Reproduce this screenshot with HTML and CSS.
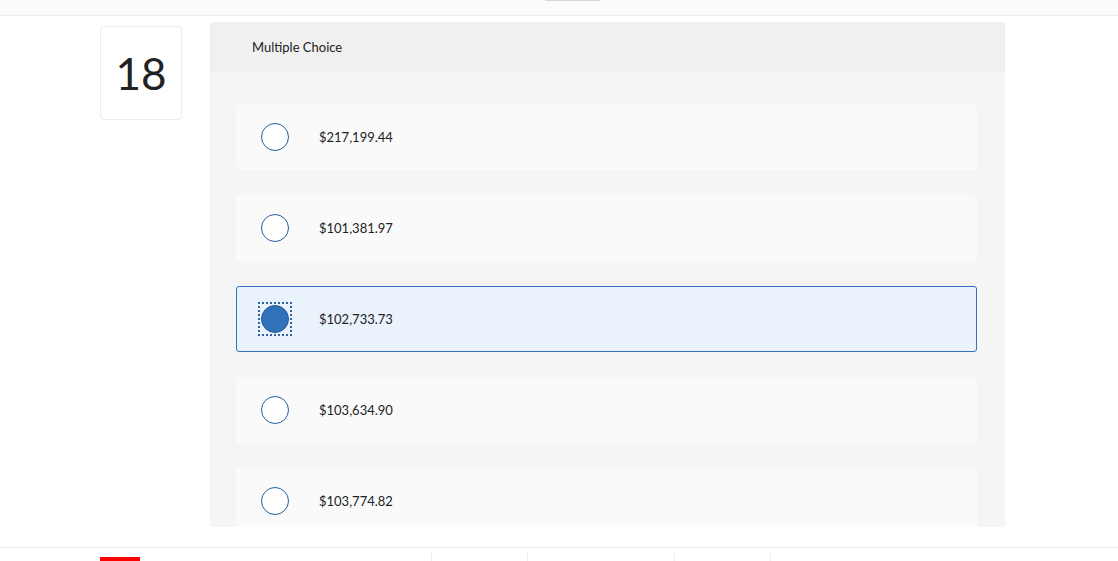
FILE: index.html
```html
<!DOCTYPE html>
<html lang="en">
<head>
    <meta charset="UTF-8">
    <meta name="viewport" content="width=device-width, initial-scale=1.0">
    <title>Question 18</title>
    <link rel="stylesheet" href="styles.css">
</head>
<body>
    <div class="topbar">
        <div class="topbar-tab"></div>
    </div>
    <div class="main">
        <div class="question-number">18</div>
        <div class="question">
            <div class="question-header">Multiple Choice</div>
            <div class="choices">
                <div class="choice">
                    <span class="radio-wrap"><span class="radio"></span></span>
                    <span class="choice-text">$217,199.44</span>
                </div>
                <div class="choice">
                    <span class="radio-wrap"><span class="radio"></span></span>
                    <span class="choice-text">$101,381.97</span>
                </div>
                <div class="choice selected">
                    <span class="radio-wrap"><span class="radio"></span></span>
                    <span class="choice-text">$102,733.73</span>
                </div>
                <div class="choice">
                    <span class="radio-wrap"><span class="radio"></span></span>
                    <span class="choice-text">$103,634.90</span>
                </div>
                <div class="choice">
                    <span class="radio-wrap"><span class="radio"></span></span>
                    <span class="choice-text">$103,774.82</span>
                </div>
            </div>
        </div>
    </div>
    <div class="footer">
        <div class="progress"></div>
        <div class="tabs">
            <div class="tab tab-sm"></div>
            <div class="tab tab-lg"></div>
            <div class="tab tab-sm"></div>
            <div class="tab tab-rest"></div>
        </div>
    </div>
</body>
</html>
```

FILE: styles.css
```css
body {
    font-family: Lato, "Open Sans", Arial, sans-serif;
    margin: 0;
    padding: 0;
    height: 561px;
    overflow: hidden;
    background-color: white;
    color: #222;
}

.topbar {
    height: 15px;
    background-color: #fbfbfb;
    border-bottom: 1px solid #ececec;
    padding-left: 545px;
}

.topbar-tab {
    width: 55px;
    height: 1px;
    background-color: #d9d9d9;
    border-radius: 0 0 2px 2px;
}

.main {
    height: 525px;
    padding: 6px 0 0 100px;
    display: flex;
    align-items: flex-start;
    gap: 28px;
}

.question-number {
    width: 80px;
    height: 92px;
    margin-top: 4px;
    border: 1px solid #ececec;
    border-radius: 4px;
    display: flex;
    justify-content: center;
    align-items: center;
    font-size: 44px;
    color: #222;
}

.question {
    width: 795px;
    height: 505px;
    overflow: hidden;
    background-color: #f5f5f5;
    border-radius: 3px 3px 0 0;
}

.question-header {
    height: 50px;
    background-color: #f0f0f0;
    padding-left: 42px;
    display: flex;
    align-items: center;
    font-size: 13px;
    color: #222;
}

.choices {
    padding: 32px 28px 0 26px;
    display: flex;
    flex-direction: column;
    gap: 25px;
}

.choice {
    height: 66px;
    flex-shrink: 0;
    background-color: #fafafa;
    border: 1px solid #fafafa;
    border-radius: 3px;
    box-sizing: border-box;
    display: flex;
    align-items: center;
    padding-left: 21px;
}

.choice.selected {
    background-color: #eaf3fc;
    border-color: #3071c2;
}

.radio-wrap {
    width: 34px;
    height: 34px;
    box-sizing: border-box;
    padding: 1px;
    border: 2px dotted transparent;
    flex-shrink: 0;
}

.radio {
    display: block;
    width: 28px;
    height: 28px;
    box-sizing: border-box;
    border: 1.5px solid #245f9e;
    border-radius: 50%;
    background-color: white;
}

.choice.selected .radio-wrap {
    border-color: #2d62a6;
}

.choice.selected .radio {
    background-color: #3071ba;
    border-color: #225a96;
}

.choice-text {
    margin-left: 27px;
    font-size: 13px;
}

.footer {
    border-top: 1px solid #ececec;
    display: flex;
    padding-left: 100px;
}

.progress {
    width: 40px;
    height: 4px;
    margin-top: 9px;
    background-color: #f00;
}

.tabs {
    display: flex;
    margin-left: 291px;
    padding-top: 5px;
}

.tab {
    height: 20px;
    border-left: 1px solid #ececec;
}

.tab-sm {
    width: 95px;
}

.tab-lg {
    width: 146px;
}

.tab-rest {
    width: 200px;
}
```
